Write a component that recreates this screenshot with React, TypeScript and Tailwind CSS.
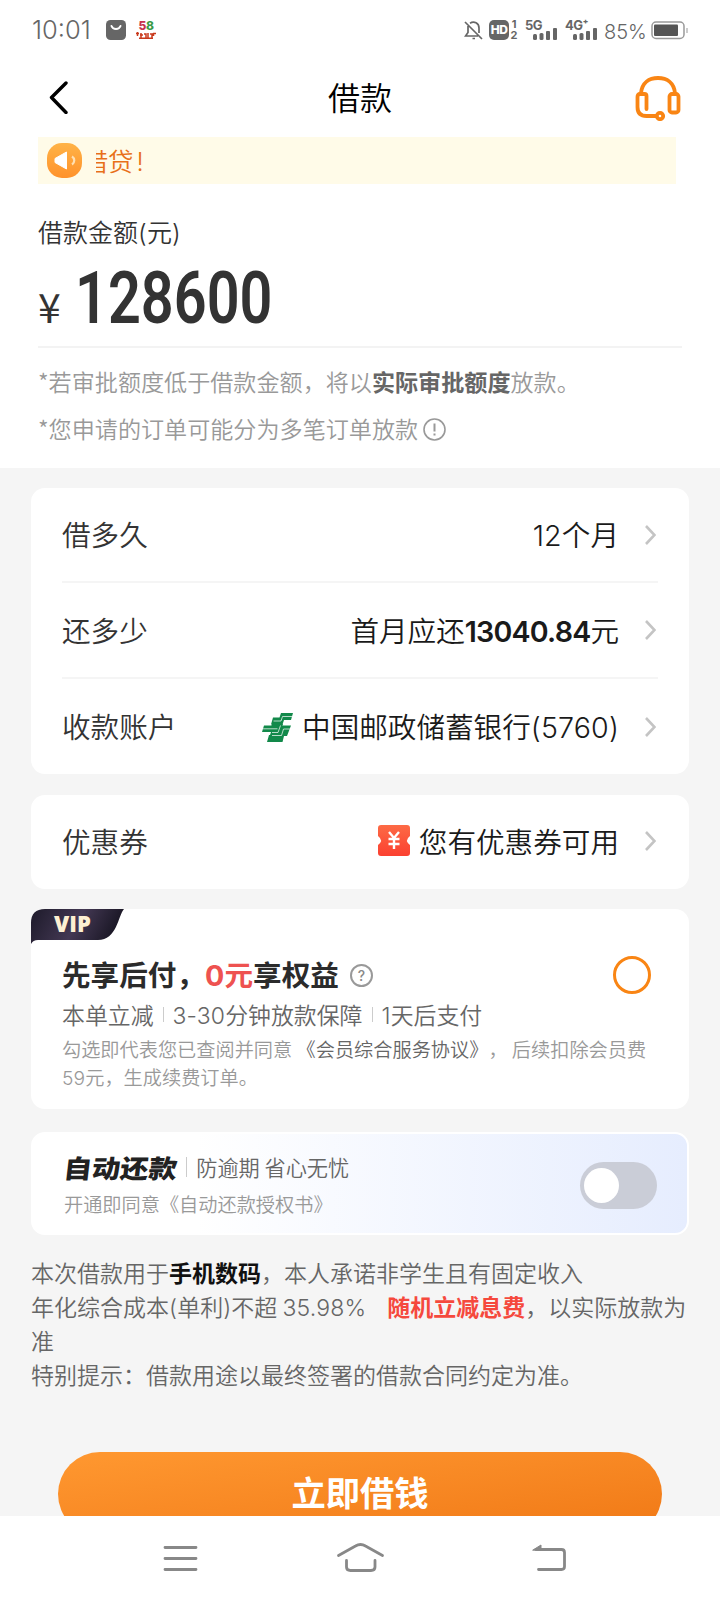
import React from 'react';

interface RowProps {
  label: string;
  children: React.ReactNode;
  className?: string;
}

// Latin digits and brackets are set a little wider than the CJK font's own
function Num({ children }: { children: React.ReactNode }) {
  return <span className="font-[Inter] leading-none tracking-[0.15px]">{children}</span>;
}

function Chevron() {
  return (
    <svg className="mr-[2px] ml-[26px] h-5 w-[11px] shrink-0" viewBox="0 0 11 20" fill="none" stroke="#c4c4c4" strokeWidth="2.6">
      <path d="M1 1l8.500 9L1 19" />
    </svg>
  );
}

function Row({ label, children, className = '' }: RowProps) {
  return (
    <div className={`flex items-center text-[28.6px] whitespace-nowrap ${className}`}>
      <span className="text-[#333]">{label}</span>
      <div className="ml-auto flex items-center text-[#1a1a1a]">{children}</div>
      <Chevron />
    </div>
  );
}

function Signal({ label, className = '' }: { label: string; className?: string }) {
  return (
    <div className={`relative h-5 ${className}`}>
      <span className="absolute -top-[3px] left-0 font-[Inter] text-[13px] leading-4 font-bold tracking-[-0.5px]">{label}</span>
      <svg className="absolute right-0 bottom-0" width="24" height="12" viewBox="0 0 24 12" fill="#666">
        <rect x="0" y="6" width="4" height="6" rx="1.500" />
        <rect x="6.500" y="5" width="4" height="7" rx="1.500" />
        <rect x="13" y="3" width="4" height="9" rx="1" />
        <rect x="20" y="0" width="4" height="12" rx="1" />
      </svg>
    </div>
  );
}

function StatusBar() {
  return (
    <div className="flex h-[60px] items-center pr-[32px] pl-[32px] text-[#666]">
      <span className="w-[60px] font-[Inter] text-[25.5px] leading-[60px] font-[350]">10:01</span>
      <svg className="ml-[14px]" width="20" height="20" viewBox="0 0 20 20">
        <rect width="20" height="20" rx="4.500" fill="#666" />
        <path d="M5.500 6c1.500 4 7.500 4 9 0" fill="none" stroke="#fff" strokeWidth="2" strokeLinecap="round" />
      </svg>
      <div className="ml-[10px] flex h-5 w-5 flex-col items-center font-[Inter] font-extrabold">
        <span className="flex text-[12px] leading-[12px] tracking-[-0.5px]">
          <span className="text-[#c8324e]">5</span>
          <span className="text-[#3a9a48]">8</span>
        </span>
        <svg width="20" height="7" viewBox="0 0 20 7" fill="none" stroke="#c9391c" strokeWidth="1.500">
          <path d="M0 1.500h3M1.500 0v4M4 3h3M5 1v5M8 2h2v4M12 1v5M14 2h2v4M17.500 1v3M20 1.500h-3M3 6.200h14" />
        </svg>
      </div>

      <div className="ml-auto flex items-center">
        <svg width="19" height="20" viewBox="0 0 19 20" fill="none" stroke="#666" strokeWidth="1.700">
          <path d="M1 2l17 17M4 6v6.500L1.500 16H14M6 3.200C10 .8 15 3 15 8v5M8.500 18.500h2.500" />
        </svg>
        <div className="ml-[6px] flex h-5 w-5 items-center justify-center rounded-[5px] bg-[#666] font-[Inter] text-[12px] font-extrabold tracking-[-0.5px] text-white">HD</div>
        <div className="ml-[1px] flex w-[8px] flex-col items-center font-[Inter] text-[11px] leading-[11px] font-bold">
          <span>1</span>
          <span>2</span>
        </div>
        <Signal label="5G" className="ml-[7px] w-[32px]" />
        <Signal label="4G⁺" className="ml-[8px] w-[32px]" />
        <span className="mt-[3px] ml-[7px] w-[41px] font-[Inter] text-[20px] leading-5 font-[350]">85%</span>
        <svg className="ml-[6px]" width="37" height="19" viewBox="0 0 37 19">
          <rect x="1" y="1" width="32" height="16.500" rx="4" fill="none" stroke="#999" strokeWidth="1.500" />
          <rect x="3" y="3.500" width="24" height="11.500" rx="1" fill="#555" />
          <path d="M36 7v5" stroke="#999" strokeWidth="1" />
        </svg>
      </div>
    </div>
  );
}

function Header() {
  return (
    <div className="flex h-[77px] items-center justify-between pr-[39px] pb-[2px] pl-[49px]">
      <svg width="46" height="33" viewBox="0 0 46 33" fill="none" stroke="#000" strokeWidth="3.4" strokeLinecap="round" strokeLinejoin="round">
        <path d="M17 2L2.500 16.500 17 31.500" />
      </svg>
      <h1 className="pr-[10px] pb-[3px] text-[32px] leading-[72px] text-black">借款</h1>
      <svg width="46" height="46" viewBox="0 0 46 46" fill="none" stroke="#f98514" strokeWidth="3.800" strokeLinecap="round" strokeLinejoin="round">
        <path d="M6 18C7 8 14 3 23 3s16 5 17 15" />
        <path d="M11.500 34V21q0-2-2-2H5q-2.500 0-2.500 3v10q0 9 9 9H21" />
        <rect x="34.500" y="19" width="9" height="18.500" rx="2.500" />
        <circle cx="25" cy="41" r="3.200" />
      </svg>
    </div>
  );
}

function BankLogo() {
  return (
    <svg className="mt-[2px] mr-[9px]" width="31" height="29" viewBox="0 0 31 29">
      <path d="M19 0H31L29 7H22L20.500 11.500H9L11 4.500H17.500Z" fill="#12894a" />
      <path d="M2 12.500H29L25 23H22L20.500 29H5L7 22H8L9 19H0Z" fill="#12894a" />
      <path d="M10 11h11l-1 3H9z" fill="#12894a" />
      <path
        d="M30 3.500H20.500L19 8H11.500M1 15.800H15.500M18.500 12.500L16 19.500H10M28 16H21.500L19.500 22.500H10"
        fill="none"
        stroke="#fff"
        strokeWidth="0.7"
      />
    </svg>
  );
}

function VipCard() {
  return (
    <section className="relative mt-5 h-[200px] rounded-[14px] bg-white px-[31px] pt-[45px]">
      <svg className="absolute top-0 left-0" width="93" height="35" viewBox="0 0 93 35">
        <defs>
          <linearGradient id="vip" x1="0" x2="1" y1="0" y2="0.200">
            <stop offset="0" stopColor="#1d1a2a" />
            <stop offset="0.550" stopColor="#433853" />
            <stop offset="1" stopColor="#191624" />
          </linearGradient>
        </defs>
        <path d="M14 0H93C87 7 86 31 67 31H7Q2 31 0 35V14Q0 0 14 0Z" fill="url(#vip)" />
      </svg>
      <span className="absolute top-[2px] left-[23px] font-['Open_Sans'] text-[22px] leading-[25px] font-extrabold text-[#fdf0d2]">VIP</span>
      <div className="flex items-center">
        <h2 className="-mt-px text-[28.600px] leading-[42px] font-bold whitespace-nowrap text-[#2b2b2b]">
          先享后付，
          <span className="text-[#ee5250]">
            <Num>0</Num>元
          </span>
          享权益
        </h2>
        <span className="mt-px ml-[11px] flex h-[23px] w-[23px] items-center justify-center rounded-full border-2 border-[#999] font-[Inter] text-[14px] font-medium text-[#888]">?</span>
        <span className="mr-[7px] ml-auto h-[38px] w-[38px] rounded-full border-[3px] border-[#f98514]" />
      </div>
      <div className="flex h-[39px] items-center text-[22.900px] whitespace-nowrap text-[#666]">
        <span>本单立减</span>
        <i className="mx-[9px] h-[15px] w-px bg-[#ccc]" />
        <span>
          <Num>3-30</Num>分钟放款保障
        </span>
        <i className="mx-[9px] h-[15px] w-px bg-[#ccc]" />
        <span>
          <Num>1</Num>天后支付
        </span>
      </div>
      <p className="pt-px text-[19.200px] leading-[28px] whitespace-nowrap text-[#999]">
        勾选即代表您已查阅并同意 <span className="text-[#666]">《会员综合服务协议》</span>， 后续扣除会员费
        <br />
        <Num>59</Num>元，生成续费订单。
      </p>
    </section>
  );
}

function AutoRepayCard() {
  return (
    <section className="mt-[23px] flex h-[103px] items-center rounded-[14px] border-2 border-white bg-linear-to-r from-white from-25% to-[#e6edfe] pt-[4px] pr-[30px] pl-[31px]">
      <div className="whitespace-nowrap">
        <div className="flex h-9 items-center pb-[2px]">
          <strong className="-skew-x-6 scale-y-90 text-[28.300px] leading-9 font-black text-[#222]">自动还款</strong>
          <i className="mx-[9px] h-5 w-px bg-[#ccc]" />
          <span className="text-[21.200px] text-[#666]">防逾期 省心无忧</span>
        </div>
        <p className="text-[19.200px] leading-9 text-[#999]">开通即同意《自动还款授权书》</p>
      </div>
      <div className="ml-auto h-[47px] w-[77px] rounded-full bg-[#cacdd7] pt-[6px] pl-1">
        <div className="h-[35px] w-[35px] rounded-full bg-white" />
      </div>
    </section>
  );
}

function NavBar() {
  return (
    <nav className="flex h-[84px] items-center bg-white">
      <svg width="720" height="84" viewBox="0 0 720 84" fill="none" stroke="#888" strokeWidth="2.800" strokeLinecap="round" strokeLinejoin="round">
        <path d="M165 31.500h31M165 42.500h31M165 53.500h31" />
        <path d="M338.500 39.500l17-9.500q5-3 10 0l17 9.500M346.500 44.500v6.500q0 3.500 4 3.500h20.500q4 0 4-3.500v-6.500" />
        <path d="M538.500 53.500h23q3 0 3-3V36.500q0-3-3-3H536" />
        <path d="M533 34l8-5v5z" fill="#888" strokeWidth="1" />
      </svg>
    </nav>
  );
}

export default function App() {
  return (
    <div className="flex h-[1600px] w-[720px] flex-col overflow-hidden bg-[#f5f5f5] font-['Noto_Sans_CJK_SC',sans-serif] font-[350] [text-spacing-trim:space-all]">
      <div className="h-[468px] shrink-0 bg-white">
        <StatusBar />
        <Header />
        <div className="ml-[38px] flex h-[47px] w-[638px] items-center bg-[#fffbe8] pl-[9px]">
          <svg width="35" height="35" viewBox="0 0 35 35">
            <defs>
              <linearGradient id="horn" x1="0" x2="0" y1="0" y2="1">
                <stop offset="0" stopColor="#ffb347" />
                <stop offset="1" stopColor="#ff922b" />
              </linearGradient>
            </defs>
            <rect width="35" height="35" rx="15" fill="url(#horn)" />
            <path d="M8 15.500L19.500 9v17L8 19.500z" fill="#fff" stroke="#fff" strokeLinejoin="round" />
            <path d="M25 13.500c3 2 3 6 0 8" fill="none" stroke="#ffe0b3" strokeWidth="2.200" />
          </svg>
          <div className="ml-[14px] overflow-hidden text-[25.500px] leading-[47px] text-[#e8701a]">
            <span className="-ml-[13.500px]">
              借贷<span className="ml-[3px] font-[Inter]">!</span>
            </span>
          </div>
        </div>

        <div className="px-[38px]">
          <p className="pt-[28px] text-[25px] leading-[38px] text-[#333]">
            借款金额<Num>(</Num>元<Num>)</Num>
          </p>
          <div className="flex h-[98px] items-baseline border-b-2 border-[#f3f3f3] text-[#333]">
            <span className="text-[41px] leading-[110px] font-normal">¥</span>
            <span className="ml-[14px] origin-left scale-x-[0.8] font-[Roboto] text-[72px] leading-[90px] font-semibold">128600</span>
          </div>
          <p className="mt-[10px] text-[23.100px] leading-[47px] whitespace-nowrap text-[#999]">
            *若审批额度低于借款金额，将以<b className="font-bold text-[#666]">实际审批额度</b>放款。
          </p>
          <p className="flex items-center text-[23.100px] leading-[47px] whitespace-nowrap text-[#999]">
            *您申请的订单可能分为多笔订单放款
            <svg className="mt-[2px] ml-[5px]" width="23" height="23" viewBox="0 0 23 23" fill="none" stroke="#999" strokeWidth="1.600">
              <circle cx="11.500" cy="11.500" r="10.500" />
              <path d="M11.500 5.500v8M11.500 15.500v2" strokeWidth="2" />
            </svg>
          </p>
        </div>
      </div>

      <main className="h-[1048px] shrink-0 overflow-hidden px-[31px] pt-[20px]">
        <section className="rounded-[14px] bg-white pr-[31px] pl-[31px]">
          <Row label="借多久" className="h-[95px] border-b-2 border-[#f5f5f5]">
            <span>
              <Num>12</Num>个月
            </span>
          </Row>
          <Row label="还多少" className="h-[96px] border-b-2 border-[#f5f5f5]">
            <span>
              首月应还<b className="font-[Inter] leading-none font-semibold tracking-[-0.8px]">13040.84</b>元
            </span>
          </Row>
          <Row label="收款账户" className="h-[95px]">
            <BankLogo />
            <span>
              中国邮政储蓄银行<Num>(5760)</Num>
            </span>
          </Row>
        </section>

        <section className="mt-[21px] rounded-[14px] bg-white pr-[31px] pl-[31px]">
          <Row label="优惠券" className="h-[94px] pb-[2px]">
            <svg className="mr-[9px]" width="32" height="31" viewBox="0 0 32 31">
              <defs>
                <linearGradient id="coupon" x1="0" x2="0" y1="0" y2="1">
                  <stop offset="0" stopColor="#fd6a45" />
                  <stop offset="1" stopColor="#fb4030" />
                </linearGradient>
              </defs>
              <path d="M3 0h26q3 0 3 3v8q-6 4.500 0 9v8q0 3-3 3H3q-3 0-3-3v-8q6-4.500 0-9V3q0-3 3-3z" fill="url(#coupon)" />
              <path d="M11 7l5 6 5-6M16 13v11M10.500 14h11M10.500 19h11" fill="none" stroke="#fff" strokeWidth="2.400" />
            </svg>
            <span>您有优惠券可用</span>
          </Row>
        </section>

        <VipCard />
        <AutoRepayCard />

        <div className="mt-[20px] text-[23px] leading-[34px] whitespace-nowrap text-[#666]">
          <p>
            本次借款用于<b className="font-bold text-[#111]">手机数码</b>，本人承诺非学生且有固定收入
          </p>
          <p>
            年化综合成本<Num>(</Num>单利<Num>)</Num>不超 <Num>35.98%</Num>
            <b className="ml-[21px] font-bold text-[#f5493d]">随机立减息费</b>，以实际放款为
          </p>
          <p>准</p>
          <p>特别提示：借款用途以最终签署的借款合同约定为准。</p>
        </div>

        <button className="mx-[27px] mt-[61px] block h-[84px] w-[604px] rounded-full bg-linear-to-br from-[#ff9830] to-[#f07814] pb-[7px] text-[34.300px] leading-[76px] font-bold text-white">
          立即借钱
        </button>
      </main>

      <NavBar />
    </div>
  );
}
